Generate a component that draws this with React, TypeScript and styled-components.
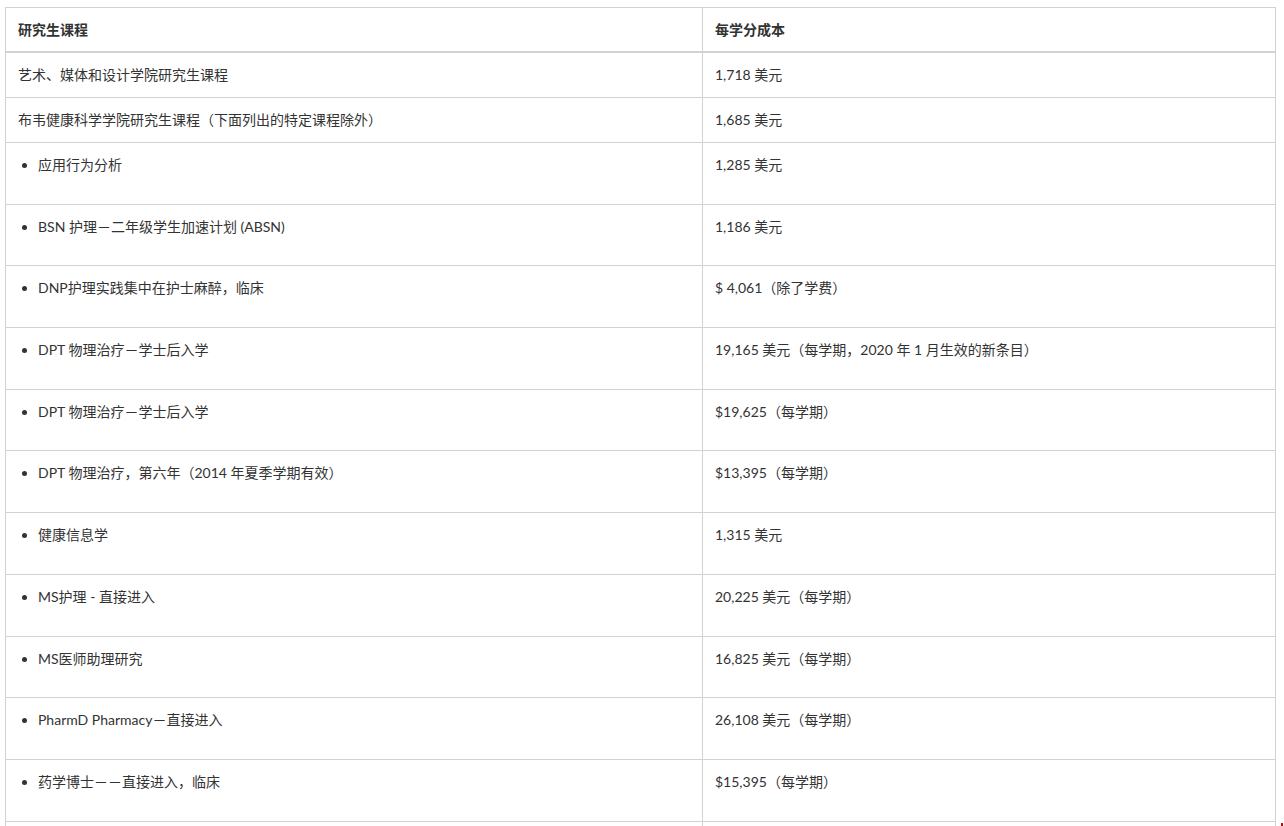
import React from "react";
import styled, { createGlobalStyle } from "styled-components";

const Global = createGlobalStyle`
  html, body { margin: 0; padding: 0; background: #fff; overflow: hidden; }
  body { font-family: Lato, "Noto Sans CJK SC", sans-serif; color: #333; }
`;

const Page = styled.div`
  padding: 7px 0 0 5px;
  height: 826px;
  box-sizing: border-box;
  overflow: hidden;
`;

const Table = styled.table`
  width: 1271px;
  border-collapse: collapse;
  table-layout: fixed;
  font-size: 14px;
  line-height: 20px;
  border: 1px solid #d2d2d2;
`;

const Th = styled.th<{ $w?: string }>`
  text-align: left;
  font-weight: 700;
  padding: 12px 12px 11px;
  border: 1px solid #d2d2d2;
  border-bottom: 2px solid #d2d2d2;
  width: ${(p) => p.$w || "auto"};
  color: #333;
`;

const Td = styled.td`
  padding: 12px 12px;
  border: 1px solid #d2d2d2;
  vertical-align: top;
  color: #333;
  height: 20px;
`;

const List = styled.ul`
  margin: 0 0 16.7px;
  padding: 0 0 0 20px;
  list-style: disc;
`;

const Item = styled.li``;

const Corner = styled.span`
  position: fixed;
  right: 1px;
  bottom: 0;
  width: 2px;
  height: 3px;
  background: #c00;
`;

type Row = { name: string; cost: string; bullet?: boolean };

const rows: Row[] = [
  { name: "艺术、媒体和设计学院研究生课程", cost: "1,718 美元" },
  { name: "布韦健康科学学院研究生课程（下面列出的特定课程除外）", cost: "1,685 美元" },
  { name: "应用行为分析", cost: "1,285 美元", bullet: true },
  { name: "BSN 护理－二年级学生加速计划 (ABSN)", cost: "1,186 美元", bullet: true },
  { name: "DNP护理实践集中在护士麻醉，临床", cost: "$ 4,061（除了学费）", bullet: true },
  { name: "DPT 物理治疗－学士后入学", cost: "19,165 美元（每学期，2020 年 1 月生效的新条目）", bullet: true },
  { name: "DPT 物理治疗－学士后入学", cost: "$19,625（每学期）", bullet: true },
  { name: "DPT 物理治疗，第六年（2014 年夏季学期有效）", cost: "$13,395（每学期）", bullet: true },
  { name: "健康信息学", cost: "1,315 美元", bullet: true },
  { name: "MS护理 - 直接进入", cost: "20,225 美元（每学期）", bullet: true },
  { name: "MS医师助理研究", cost: "16,825 美元（每学期）", bullet: true },
  { name: "PharmD Pharmacy－直接进入", cost: "26,108 美元（每学期）", bullet: true },
  { name: "药学博士－－直接进入，临床", cost: "$15,395（每学期）", bullet: true },
];

export default function App() {
  return (
    <>
      <Global />
      <Page>
        <Table>
          <thead>
            <tr>
              <Th $w="672px">研究生课程</Th>
              <Th>每学分成本</Th>
            </tr>
          </thead>
          <tbody>
            {rows.map((r, i) => (
              <tr key={i}>
                <Td>
                  {r.bullet ? (
                    <List>
                      <Item>{r.name}</Item>
                    </List>
                  ) : (
                    r.name
                  )}
                </Td>
                <Td>{r.cost}</Td>
              </tr>
            ))}
            <tr>
              <Td />
              <Td />
            </tr>
          </tbody>
        </Table>
      </Page>
      <Corner />
    </>
  );
}
